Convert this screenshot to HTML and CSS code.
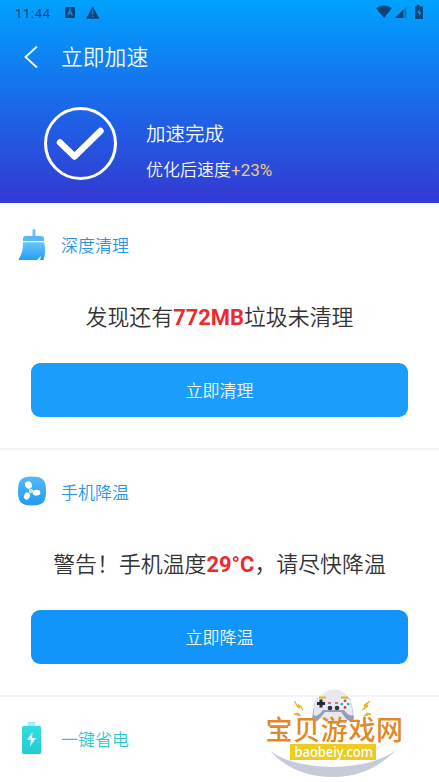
FILE: index.html
```
<!DOCTYPE html>
<html lang="zh-CN">
<head>
<meta charset="utf-8">
<title>立即加速</title>
<link rel="stylesheet" href="styles.css">
</head>
<body>
<div class="screen">
  <header class="hero">
    <div class="status">
      <span class="time">11:44</span>
      <svg class="status-left" width="40" height="14" viewBox="0 0 40 14">
        <rect x="1" y="1" width="10" height="11" rx="1.2" fill="#05457a"/>
        <path d="M3.6 9.2 6 3.6 8.4 9.2M4.5 7.3h3" fill="none" stroke="#168eea" stroke-width="1.2"/>
        <path d="M28.700 .5 35.500 12.800H22z" fill="#05457a"/>
        <path d="M28.700 4.500v4M28.700 9.800v1.500" stroke="#168eea" stroke-width="1.3"/>
      </svg>
      <svg class="status-right" width="50" height="16" viewBox="0 0 50 16">
        <path d="M1 4Q9 -1 17 4L9 14z" fill="#05457a"/>
        <path d="M20 14 31.500 2.500V14z" fill="#0877c4"/>
        <path d="M20 14 28 6V14z" fill="#05457a"/>
        <path d="M41.500 1h3v1.500H48V15h-8V2.500h1.500z" fill="#05457a"/>
        <path d="M44.500 4.500 42 9h2v3.500L46.500 8h-2z" fill="#168eea"/>
      </svg>
    </div>
    <div class="titlebar">
      <svg class="back" width="16" height="24" viewBox="0 0 16 24"><path d="M14 1.500 2.500 12 14 22.500" fill="none" stroke="#e8f6ff" stroke-width="2"/></svg>
      <h1>立即加速</h1>
    </div>
    <div class="result">
      <svg width="75" height="74" viewBox="0 0 75 74">
        <circle cx="37.500" cy="37.500" r="35" fill="none" stroke="#fff" stroke-width="3"/>
        <path d="M17 36.500 31.500 50.500 57.500 25" fill="none" stroke="#fff" stroke-width="6.500" stroke-linecap="round" stroke-linejoin="round"/>
      </svg>
      <div class="result-text">
        <p class="done">加速完成</p>
        <p class="speed">优化后速度<span>+23%</span></p>
      </div>
    </div>
  </header>
  <section class="card">
    <h2>
      <svg width="28" height="32" viewBox="0 0 28 32">
        <defs><linearGradient id="g1" x2="0" y2="1"><stop stop-color="#67c5fa"/><stop offset="1" stop-color="#289df5"/></linearGradient></defs>
        <rect x="14.500" y="0" width="3" height="10" rx="1.500" fill="#67c5fa"/>
        <path d="M7.500 7h16q2.500 0 2.500 2.500v2.500H5V9.500q0-2.500 2.500-2.500z" fill="#55bbf8"/>
        <path d="M5 13.200h21Q28.500 23 25.500 31h-3.500l1-4-4 4H1.500Q0 31 1 29.500 5 24 5 13.200z" fill="url(#g1)"/>
      </svg>
      <span>深度清理</span>
    </h2>
    <p class="message">发现还有<b>772MB</b>垃圾未清理</p>
    <button class="action">立即清理</button>
  </section>
  <section class="card">
    <h2>
      <svg class="fan" width="28" height="30" viewBox="0 0 28 30">
        <defs><linearGradient id="g2" x2="0" y2="1"><stop stop-color="#53bafa"/><stop offset="1" stop-color="#2499f2"/></linearGradient></defs>
        <path d="M14 .5C25 .5 28 4 28 15S25 29.500 14 29.500 0 26 0 15 3 .5 14 .5z" fill="url(#g2)"/>
        <g fill="#fff"><ellipse cx="10.500" cy="9" rx="3.400" ry="3.800" transform="rotate(-25 10.500 9)"/><ellipse cx="9" cy="20" rx="2.900" ry="3.700" transform="rotate(25 9 20)"/><ellipse cx="18.500" cy="16.700" rx="3.900" ry="2.900" transform="rotate(-8 18.500 16.700)"/><circle cx="13" cy="15" r="2"/></g>
        <circle cx="13" cy="15" r="1" fill="#8bd1fa"/>
      </svg>
      <span>手机降温</span>
    </h2>
    <p class="message">警告！手机温度<b>29°C</b>，请尽快降温</p>
    <button class="action cool">立即降温</button>
  </section>
  <section class="card power">
    <h2>
      <svg width="28" height="34" viewBox="0 0 28 34">
        <defs><linearGradient id="g3" x2="0" y2="1"><stop stop-color="#34dedf"/><stop offset="1" stop-color="#25c9d4"/></linearGradient></defs>
        <rect x="9.500" y="0" width="8" height="5" rx="1" fill="#a2f2ed"/>
        <rect x="4" y="4" width="19" height="28" rx="1.500" fill="url(#g3)"/>
        <path d="M14.500 10 9 18h4l-1 6.500L18 16h-4z" fill="#e7ffff"/>
      </svg>
      <span>一键省电</span>
    </h2>
  </section>
  <svg class="watermark" width="189" height="102" viewBox="0 0 189 102">
    <circle cx="84" cy="27" r="17.500" fill="#e9e9eb"/>
    <path d="M20 71Q40 86 83 87 125 86 146 70 120 97 83 97 44 97 20 71z" fill="#c7cad8"/>
    <path d="M66 19Q68 17 75 19H91Q99 17 100 19 102 24 104 39 99 44 94 36L91 32H75L71 37Q65 45 62 39 64 24 66 19z" fill="#9a9eb5"/>
    <path d="M66 19Q68 17 76 19H91Q99 17 101 21L103 35Q99 37 94 30H73Q67 38 63.500 35 64 24 66 19z" fill="#e7e8f3"/>
    <path d="M69 17.500h7M91 17.500h7" stroke="#e5b51d" stroke-width="2"/>
    <path d="M67 23.500h8M71 19.500v8" stroke="#222936" stroke-width="3"/>
    <circle cx="80" cy="28" r="2.300" fill="#27384b"/><circle cx="87" cy="28" r="2.300" fill="#27384b"/>
    <path d="M78 23h3M85 23h3" stroke="#df4452" stroke-width="1.300"/>
    <circle cx="95" cy="24" r="5" fill="#fff"/>
    <circle cx="95" cy="20.800" r="1.500" fill="#e34b56"/><circle cx="95" cy="27.200" r="1.500" fill="#d33e50"/><circle cx="91.800" cy="24" r="1.500" fill="#3ab5bd"/><circle cx="98.200" cy="24" r="1.500" fill="#3ab5bd"/>
    <path d="M44.500 21 49 28.500 50.500 25.500 53 30 48.500 24.500 47.500 27zM120 21 114 25 115 27 112 30 118 26.500 117 24.500zM44 34l4-1 3 3-4-1zM121 34l-4-1-3 3 4-1z" fill="#e9b51d" stroke="#e9b51d"/>
    <text class="site-name" x="15.500" y="59.500" textLength="137.500">宝贝游戏网</text>
    <rect x="40" y="64" width="86" height="16" fill="#edcb22"/>
    <text class="site-url" x="44.500" y="76.500" textLength="78.500" lengthAdjust="spacingAndGlyphs">baobeiy.com</text>
  </svg>
</div>
</body>
</html>
```
FILE: styles.css
```
* { box-sizing: border-box; margin: 0; padding: 0; }
body {
  background: #fff;
  font-family: Roboto, "Noto Sans CJK SC", sans-serif;
  font-weight: 350;
  color: #333;
}
.screen { position: relative; height: 782px; overflow: hidden; }
.hero {
  height: 203px;
  background: linear-gradient(#00a2ff, #1a6aea 50%, #3438d2);
  color: #f2faff;
}
.status { display: flex; height: 26px; padding: 0 14px 0 15px; }
.time { width: 49px; padding-top: 5px; font-size: 13px; font-weight: 400; line-height: 17px; letter-spacing: .7px; color: #05457a; }
.status-left { margin-top: 6px; }
.status-right { margin: 4px 0 0 auto; }
.titlebar { display: flex; align-items: center; height: 62px; padding-left: 23px; }
h1 { margin-left: 22px; padding-top: 2px; font-size: 21.800px; font-weight: 350; line-height: 32px; }
.result { display: flex; padding: 18px 0 0 43px; }
.result-text { margin-left: 28px; padding-top: 13px; }
.done { font-size: 19.500px; line-height: 32px; }
.speed { margin-top: 6px; font-size: 17px; line-height: 26px; }
.speed span { font-weight: 400; color: #e9cd80; }
.card { height: 247px; border-bottom: 2px solid #f2f3fb; }
h2 {
  display: flex;
  align-items: center;
  height: 84px;
  padding-left: 18px;
  font-size: 17px;
  font-weight: 350;
  color: #2796ea;
}
h2 span { margin-left: 15px; padding-bottom: 2px; }
.fan { margin-top: -2px; }
.message { height: 76px; padding-top: 14px; font-size: 21.900px; line-height: 34px; text-align: center; white-space: nowrap; }
.message b { font-weight: 700; color: #ec2a2d; }
.action {
  display: block;
  width: 377px;
  height: 54px;
  margin-left: 31px;
  padding-bottom: 1px;
  border: 0;
  border-radius: 9px;
  background: #1b9dfb;
  color: #effaff;
  font: inherit;
  font-size: 17px;
}
.cool { background: #1295fb; }
.power { border: 0; }
.power h2 { color: #2fc6d2; }
.watermark { position: absolute; left: 250px; top: 680px; }
.site-name {
  font: 500 27px "Noto Sans CJK SC", sans-serif;
  fill: #e08a25;
}
.site-url { font: 500 14.500px "Noto Sans", sans-serif; fill: #fff; }
```
